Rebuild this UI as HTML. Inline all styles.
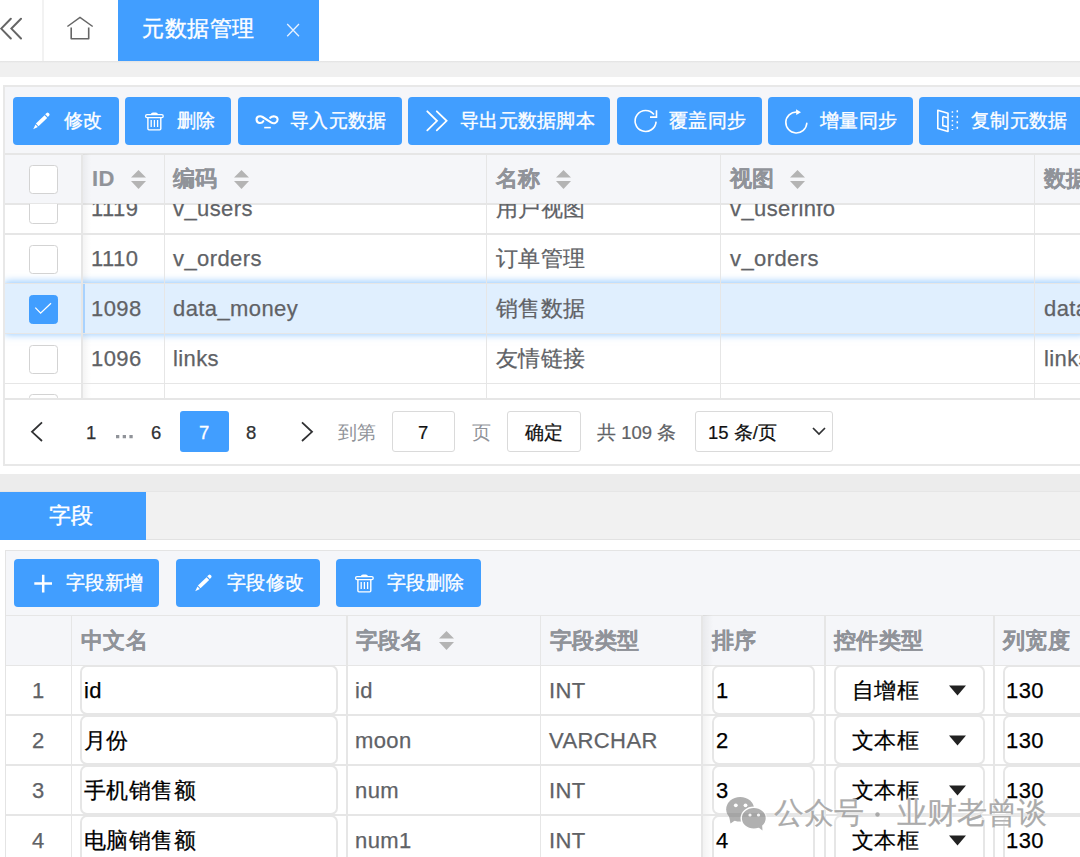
<!DOCTYPE html>
<html><head><meta charset="utf-8">
<style>
*{box-sizing:border-box;margin:0;padding:0}
html,body{width:1080px;height:857px;overflow:hidden;background:#fff;font-family:"Liberation Sans",sans-serif}
.a{position:absolute}
.t{position:absolute;white-space:nowrap;line-height:0;height:0}
.hl{position:absolute;height:1.5px;background:#e6e6e6}
.vl{position:absolute;width:1.5px;background:#e6e6e6}
.btn{position:absolute;background:#419eff;border-radius:4px}
.bt{position:absolute;white-space:nowrap;line-height:0;height:0;color:#fff;font-size:19px;letter-spacing:0.3px;-webkit-text-stroke:0.35px #fff}
.hd{color:#909399;font-weight:bold;font-size:22px;letter-spacing:0.3px;-webkit-text-stroke:0.15px #909399}
.cell{color:#606266;font-size:22px;-webkit-text-stroke:0.25px currentColor;letter-spacing:0.4px}
.sort{position:absolute;width:15px;height:19px}
.chk{position:absolute;width:29px;height:29px;border:1.6px solid #d3d3d3;border-radius:3.5px;background:#fff}
.inp{position:absolute;border:2px solid #e6e6e6;border-radius:7px;background:#fff}
</style></head><body>

<!-- ============ TOP BAR ============ -->
<div class="a" style="left:0;top:0;width:1080px;height:61px;background:#fff"></div>
<svg class="a" style="left:0;top:16px" width="24" height="26" viewBox="0 0 24 26">
<path d="M10.8 2.8 L1.2 12.6 L10.8 22.5 M21 2.8 L11.4 12.6 L21 22.5" fill="none" stroke="#666" stroke-width="2" stroke-linecap="round"/>
</svg>
<div class="vl" style="left:42px;top:0;height:61px;background:#f2f2f2"></div>
<svg class="a" style="left:60px;top:10px" width="40" height="34" viewBox="0 0 40 34">
<path d="M7.4 16.5 L20 7.4 L32.7 16.5" fill="none" stroke="#666" stroke-width="1.5"/>
<path d="M11.2 17.4 V28.7 H28.7 V17.4" fill="none" stroke="#666" stroke-width="1.6" stroke-linejoin="round"/>
</svg>
<div class="a" style="left:118px;top:0;width:201px;height:61px;background:#419eff"></div>
<div class="t" style="left:142px;top:28.5px;font-size:22px;letter-spacing:0.6px;color:#fff;-webkit-text-stroke:0.4px #fff">元数据管理</div>
<svg class="a" style="left:284px;top:21px" width="18" height="18" viewBox="0 0 18 18">
<path d="M3.2 3 L15 15.2 M15 3 L3.2 15.2" stroke="#e8f2ff" stroke-width="1.3"/>
</svg>
<!-- gray band -->
<div class="a" style="left:0;top:61px;width:1080px;height:16px;background:#f0f0f0"></div>
<div class="a" style="left:0;top:61px;width:1080px;height:2px;background:linear-gradient(#e2e2e2,#f0f0f0)"></div>

<!-- ============ CARD 1 ============ -->
<div class="a" style="left:3px;top:85px;width:1090px;height:381px;border:2px solid #e8e8e8;background:#fff"></div>
<div class="a" style="left:5px;top:87px;width:1080px;height:66px;background:#f5f6f9"></div>

<!-- toolbar buttons -->
<div class="btn" style="left:13px;top:97px;width:106px;height:48px"></div>
<div class="btn" style="left:125px;top:97px;width:106px;height:48px"></div>
<div class="btn" style="left:238px;top:97px;width:164px;height:48px"></div>
<div class="btn" style="left:408px;top:97px;width:202px;height:48px"></div>
<div class="btn" style="left:617px;top:97px;width:145px;height:48px"></div>
<div class="btn" style="left:768px;top:97px;width:145px;height:48px"></div>
<div class="btn" style="left:919px;top:97px;width:170px;height:48px"></div>

<div class="bt" style="left:64px;top:121px">修改</div>
<div class="bt" style="left:177px;top:121px">删除</div>
<div class="bt" style="left:290px;top:121px">导入元数据</div>
<div class="bt" style="left:460px;top:121px">导出元数据脚本</div>
<div class="bt" style="left:669px;top:121px">覆盖同步</div>
<div class="bt" style="left:820px;top:121px">增量同步</div>
<div class="bt" style="left:971px;top:121px">复制元数据</div>

<!-- icons -->
<svg class="a" style="left:28px;top:106px" width="30" height="30" viewBox="0 0 30 30">
<path d="M5.2 23.2 L7.5 18.6 L9.9 21 Z" fill="#fff"/>
<path d="M7.9 17.4 L16.6 9.3 L19.2 12 L10.5 20.2 Z" fill="#fff"/>
<path d="M17.2 8.3 L18.6 6.9 Q19.5 6.1 20.6 7 L21.3 7.7 Q22 8.7 21.2 9.6 L19.9 11 Z" fill="#fff"/>
</svg>
<svg class="a" style="left:140px;top:106px" width="30" height="30" viewBox="0 0 30 30">
<path d="M10.8 8.5 Q11 6.6 13 6.6 H15.8 Q17.8 6.6 18 8.5 Z" fill="#fff"/>
<rect x="5.6" y="8.6" width="17.6" height="3" rx="1.4" fill="none" stroke="#fff" stroke-width="1.3"/>
<path d="M7.9 11.9 V22.8 Q7.9 23.9 9 23.9 H19.7 Q20.8 23.9 20.8 22.8 V11.9" fill="none" stroke="#fff" stroke-width="1.4"/>
<path d="M11.2 14 V21 M14.4 14 V21 M17.6 14 V21" stroke="#fff" stroke-width="1.3"/>
</svg>
<svg class="a" style="left:250px;top:106px" width="34" height="30" viewBox="0 0 34 30">
<path d="M13.3 15.2 C12 17.6 7.2 18.1 6.6 14 C6.1 10.6 10 9.3 12.6 11 L21 16.4 C24 18.4 27.6 16.6 27.6 13.5 C27.6 10 22.6 9.4 20.2 11.8" fill="none" stroke="#fff" stroke-width="2.1" stroke-linecap="round"/>
<path d="M14.2 21.6 H20.8" stroke="#fff" stroke-width="1.6"/>
</svg>
<svg class="a" style="left:420px;top:106px" width="34" height="30" viewBox="0 0 34 30">
<path d="M7.3 5.3 L17 14.8 L7.3 24.4 M16.8 5.3 L26.6 14.8 L16.8 24.4" fill="none" stroke="#fff" stroke-width="1.8" stroke-linecap="round"/>
</svg>
<svg class="a" style="left:628px;top:106px" width="34" height="30" viewBox="0 0 34 30">
<path d="M26 8.6 A10.5 10.5 0 1 0 28.1 15.6" fill="none" stroke="#fff" stroke-width="1.6"/>
<path d="M22 11.1 H28.5 V4.3" fill="none" stroke="#fff" stroke-width="1.6"/>
</svg>
<svg class="a" style="left:780px;top:106px" width="34" height="30" viewBox="0 0 34 30">
<path d="M16.6 6 A10.5 10.5 0 1 0 26.8 17.2" fill="none" stroke="#fff" stroke-width="1.6" stroke-linecap="round"/>
<path d="M16 3.2 L21 6.2 L16.3 9 Z" fill="#fff"/>
</svg>
<svg class="a" style="left:930px;top:106px" width="34" height="30" viewBox="0 0 34 30">
<path d="M7.8 4.3 L18 7.3 V25.4 L7.8 22.4 Z" fill="none" stroke="#fff" stroke-width="1.6" stroke-linejoin="round"/>
<path d="M12.8 10.5 L17.6 11.8 M12.8 10.5 V19.6 L17.6 20.8" fill="none" stroke="#fff" stroke-width="1.5"/>
<path d="M22.4 5.3 V24" stroke="#fff" stroke-width="1.5" stroke-dasharray="1.5 2.9"/>
<path d="M27.3 4.3 V23.5" stroke="#fff" stroke-width="1.5" stroke-dasharray="2 3.5"/>
</svg>

<!-- table 1 header -->
<div class="a" style="left:5px;top:153px;width:1080px;height:51px;background:#f5f6f9"></div>
<div class="hl" style="left:5px;top:153px;width:1080px"></div>
<div class="hl" style="left:5px;top:203px;width:1080px"></div>
<div class="vl" style="left:81.3px;top:153px;height:245px"></div>
<div class="vl" style="left:163.6px;top:153px;height:245px"></div>
<div class="vl" style="left:485.6px;top:153px;height:245px"></div>
<div class="vl" style="left:719.7px;top:153px;height:245px"></div>
<div class="vl" style="left:1033.8px;top:153px;height:245px"></div>

<div class="chk" style="left:29px;top:165px"></div>
<div class="a" style="left:83px;top:154px;width:8px;height:244px;background:linear-gradient(90deg,rgba(0,0,0,0.045),rgba(0,0,0,0))"></div>
<div class="t hd" style="left:92px;top:178.5px">ID</div>
<div class="t hd" style="left:173px;top:178.5px">编码</div>
<div class="t hd" style="left:496px;top:178.5px">名称</div>
<div class="t hd" style="left:730px;top:178.5px">视图</div>
<div class="t hd" style="left:1044px;top:178.5px">数据</div>
<svg class="sort" style="left:131px;top:170px" viewBox="0 0 15 19"><path d="M7.5 0 L15 7.6 H0 Z M0 11.1 H15 L7.5 19 Z" fill="#b4b4b4"/></svg>
<svg class="sort" style="left:234px;top:170px" viewBox="0 0 15 19"><path d="M7.5 0 L15 7.6 H0 Z M0 11.1 H15 L7.5 19 Z" fill="#b4b4b4"/></svg>
<svg class="sort" style="left:556px;top:170px" viewBox="0 0 15 19"><path d="M7.5 0 L15 7.6 H0 Z M0 11.1 H15 L7.5 19 Z" fill="#b4b4b4"/></svg>
<svg class="sort" style="left:790px;top:170px" viewBox="0 0 15 19"><path d="M7.5 0 L15 7.6 H0 Z M0 11.1 H15 L7.5 19 Z" fill="#b4b4b4"/></svg>

<!-- table 1 body (clipped) -->
<div class="a" style="left:5px;top:204px;width:1080px;height:194px;overflow:hidden">
<div class="a" style="left:0;top:79.3px;width:1080px;height:50px;background:#e0effe;box-shadow:0 0 8px 1px rgba(64,158,255,0.6)"></div>
<div class="a" style="left:78px;top:79.5px;width:1.5px;height:50px;background:rgba(64,158,255,0.35)"></div>
<div class="hl" style="left:0;top:29.00px;width:1080px"></div>
<div class="hl" style="left:0;top:78.50px;width:1080px"></div>
<div class="hl" style="left:0;top:128.50px;width:1080px"></div>
<div class="hl" style="left:0;top:178.50px;width:1080px"></div>
<div class="hl" style="left:0;top:228.00px;width:1080px"></div>
<div class="chk" style="left:24px;top:-9.0px"></div>
<div class="t cell" style="left:86px;top:5.0px">1119</div>
<div class="t cell" style="left:168px;top:5.0px">v_users</div>
<div class="t cell" style="left:491px;top:5.0px">用户视图</div>
<div class="t cell" style="left:725px;top:5.0px">v_userinfo</div>
<div class="chk" style="left:24px;top:40.5px"></div>
<div class="t cell" style="left:86px;top:54.5px">1110</div>
<div class="t cell" style="left:168px;top:54.5px">v_orders</div>
<div class="t cell" style="left:491px;top:54.5px">订单管理</div>
<div class="t cell" style="left:725px;top:54.5px">v_orders</div>
<div class="chk" style="left:24px;top:90.5px;background:#419eff;border-color:#419eff"><svg class="a" style="left:-1.5px;top:-1.5px" width="29" height="29" viewBox="0 0 29 29"><path d="M6.3 13.6 L11.6 19.2 L22 9.2" fill="none" stroke="#fff" stroke-width="1.3"/></svg></div>
<div class="t cell" style="left:86px;top:104.5px">1098</div>
<div class="t cell" style="left:168px;top:104.5px">data_money</div>
<div class="t cell" style="left:491px;top:104.5px">销售数据</div>
<div class="t cell" style="left:1039px;top:104.5px">data_money</div>
<div class="chk" style="left:24px;top:140.5px"></div>
<div class="t cell" style="left:86px;top:154.5px">1096</div>
<div class="t cell" style="left:168px;top:154.5px">links</div>
<div class="t cell" style="left:491px;top:154.5px">友情链接</div>
<div class="t cell" style="left:1039px;top:154.5px">links</div>
<div class="chk" style="left:24px;top:190.0px"></div>
<div class="vl" style="left:76.3px;top:0;height:194px"></div>
<div class="vl" style="left:158.6px;top:0;height:194px"></div>
<div class="vl" style="left:480.6px;top:0;height:194px"></div>
<div class="vl" style="left:714.7px;top:0;height:194px"></div>
<div class="vl" style="left:1028.8px;top:0;height:194px"></div>
</div>
<!-- pagination -->
<div class="hl" style="left:5px;top:398px;width:1080px"></div>
<svg class="a" style="left:29px;top:420px" width="16" height="24" viewBox="0 0 16 24">
<path d="M13 2.3 L3 11.8 L13 21" fill="none" stroke="#303133" stroke-width="1.8"/>
</svg>
<div class="t" style="left:86px;top:432.5px;font-size:18.5px;color:#303133;-webkit-text-stroke:0.25px #303133">1</div>
<svg class="a" style="left:115px;top:434px" width="20" height="6" viewBox="0 0 20 6"><path d="M1 1h3.3v3.3H1z M7.7 1h3.3v3.3H7.7z M14.4 1h3.3v3.3h-3.3z" fill="#909399"/></svg>
<div class="t" style="left:151px;top:432.5px;font-size:18.5px;color:#303133;-webkit-text-stroke:0.25px #303133">6</div>
<div class="a" style="left:180px;top:411px;width:49px;height:41px;background:#419eff;border-radius:3px"></div>
<div class="t" style="left:199px;top:432.5px;font-size:18.5px;color:#fff;-webkit-text-stroke:0.3px #fff">7</div>
<div class="t" style="left:246px;top:432.5px;font-size:18.5px;color:#303133;-webkit-text-stroke:0.25px #303133">8</div>
<svg class="a" style="left:299px;top:420px" width="16" height="24" viewBox="0 0 16 24">
<path d="M3 2.3 L13 11.8 L3 21" fill="none" stroke="#303133" stroke-width="1.8"/>
</svg>
<div class="t" style="left:338px;top:432.5px;font-size:18.5px;color:#909399">到第</div>
<div class="a" style="left:392px;top:411px;width:63px;height:41px;border:1.5px solid #dadada;border-radius:3px;background:#fff"></div>
<div class="t" style="left:418px;top:432.5px;font-size:18.5px;color:#111;-webkit-text-stroke:0.2px #111">7</div>
<div class="t" style="left:472px;top:432.5px;font-size:18.5px;color:#909399">页</div>
<div class="a" style="left:507px;top:411px;width:74px;height:41px;border:1.5px solid #dadada;border-radius:3px;background:#fff"></div>
<div class="t" style="left:525px;top:432.5px;font-size:18.5px;color:#111;-webkit-text-stroke:0.2px #111">确定</div>
<div class="t" style="left:597px;top:432.5px;font-size:18.5px;color:#606266;-webkit-text-stroke:0.2px #606266">共 109 条</div>
<div class="a" style="left:695px;top:411px;width:138px;height:41px;border:1.5px solid #dadada;border-radius:3px;background:#fff"></div>
<div class="t" style="left:708px;top:432.5px;font-size:18.5px;color:#111;-webkit-text-stroke:0.2px #111">15 条/页</div>
<svg class="a" style="left:811px;top:425px" width="16" height="12" viewBox="0 0 16 12">
<path d="M2 3 L8 9 L14 3" fill="none" stroke="#303133" stroke-width="1.7"/>
</svg>

<!-- ============ SECTION 2 ============ -->
<div class="a" style="left:0;top:474px;width:1080px;height:17px;background:#ececec"></div>
<div class="a" style="left:0;top:491px;width:1080px;height:49px;background:#f1f1f1;border-top:1px solid #e6e6e6;border-bottom:1.5px solid #e2e2e2"></div>
<div class="a" style="left:0;top:491.5px;width:146px;height:48px;background:#419eff"></div>
<div class="t" style="left:49px;top:516px;font-size:22px;color:#fff;-webkit-text-stroke:0.4px #fff">字段</div>

<!-- CARD 2 -->
<div class="a" style="left:4.75px;top:549.5px;width:1090px;height:400px;border:1.5px solid #e4e4e4;background:#fff"></div>
<div class="a" style="left:6px;top:551px;width:1080px;height:64px;background:#f5f6f9"></div>
<div class="btn" style="left:14px;top:559px;width:145px;height:48px"></div>
<div class="btn" style="left:176px;top:559px;width:144px;height:48px"></div>
<div class="btn" style="left:336px;top:559px;width:145px;height:48px"></div>
<div class="bt" style="left:66px;top:583px;font-size:18.8px">字段新增</div>
<div class="bt" style="left:227px;top:583px;font-size:18.8px">字段修改</div>
<div class="bt" style="left:387px;top:583px;font-size:18.8px">字段删除</div>
<svg class="a" style="left:33px;top:573px" width="20" height="20" viewBox="0 0 20 20">
<path d="M10.2 1.8 V19.5 M1.3 10.6 H19" stroke="#fff" stroke-width="2.5"/>
</svg>
<svg class="a" style="left:190px;top:568px" width="30" height="30" viewBox="0 0 30 30">
<path d="M5.2 23.2 L7.5 18.6 L9.9 21 Z" fill="#fff"/>
<path d="M7.9 17.4 L16.6 9.3 L19.2 12 L10.5 20.2 Z" fill="#fff"/>
<path d="M17.2 8.3 L18.6 6.9 Q19.5 6.1 20.6 7 L21.3 7.7 Q22 8.7 21.2 9.6 L19.9 11 Z" fill="#fff"/>
</svg>
<svg class="a" style="left:350px;top:568px" width="30" height="30" viewBox="0 0 30 30">
<path d="M10.8 8.5 Q11 6.6 13 6.6 H15.8 Q17.8 6.6 18 8.5 Z" fill="#fff"/>
<rect x="5.6" y="8.6" width="17.6" height="3" rx="1.4" fill="none" stroke="#fff" stroke-width="1.3"/>
<path d="M7.9 11.9 V22.8 Q7.9 23.9 9 23.9 H19.7 Q20.8 23.9 20.8 22.8 V11.9" fill="none" stroke="#fff" stroke-width="1.4"/>
<path d="M11.2 14 V21 M14.4 14 V21 M17.6 14 V21" stroke="#fff" stroke-width="1.3"/>
</svg>

<!-- table 2 -->
<div class="a" style="left:6px;top:615px;width:1080px;height:50px;background:#f5f6f9"></div>
<div class="hl" style="left:6px;top:614.75px;width:1080px"></div>
<div class="hl" style="left:6px;top:664.75px;width:1080px"></div>
<div class="vl" style="left:70.5px;top:615px;height:250px"></div>
<div class="vl" style="left:346px;top:615px;height:250px"></div>
<div class="vl" style="left:539.8px;top:615px;height:250px"></div>
<div class="vl" style="left:701.3px;top:615px;height:250px"></div>
<div class="a" style="left:703px;top:615px;width:10px;height:250px;background:linear-gradient(90deg,rgba(0,0,0,0.05),rgba(0,0,0,0))"></div>
<div class="vl" style="left:824px;top:615px;height:250px"></div>
<div class="vl" style="left:993.3px;top:615px;height:250px"></div>
<div class="t hd" style="left:81px;top:640.5px">中文名</div>
<div class="t hd" style="left:356px;top:640.5px">字段名</div>
<svg class="sort" style="left:439px;top:631px" viewBox="0 0 15 19"><path d="M7.5 0 L15 7.6 H0 Z M0 11.1 H15 L7.5 19 Z" fill="#b4b4b4"/></svg>
<div class="t hd" style="left:550px;top:640.5px">字段类型</div>
<div class="t hd" style="left:712px;top:640.5px">排序</div>
<div class="t hd" style="left:834px;top:640.5px">控件类型</div>
<div class="t hd" style="left:1003px;top:640.5px">列宽度</div>
<div class="hl" style="left:6px;top:714.25px;width:1080px"></div>
<div class="t cell" style="left:32px;top:690.8px">1</div>
<div class="inp" style="left:80px;top:664.75px;width:258px;height:50px"></div>
<div class="t cell" style="left:84px;top:690.8px;color:#000">id</div>
<div class="t cell" style="left:355px;top:690.8px">id</div>
<div class="t cell" style="left:549px;top:690.8px">INT</div>
<div class="inp" style="left:712px;top:664.75px;width:103px;height:50px"></div>
<div class="t cell" style="left:716px;top:690.8px;color:#000">1</div>
<div class="inp" style="left:834px;top:664.75px;width:151px;height:50px"></div>
<div class="t cell" style="left:852px;top:690.8px;color:#000">自增框</div>
<svg class="a" style="left:949px;top:685px" width="18" height="11" viewBox="0 0 18 11"><path d="M0 0.5 H17 L8.5 10.5 Z" fill="#222"/></svg>
<div class="inp" style="left:1003px;top:664.75px;width:100px;height:50px"></div>
<div class="t cell" style="left:1006px;top:690.8px;color:#000">130</div>
<div class="hl" style="left:6px;top:764.25px;width:1080px"></div>
<div class="t cell" style="left:32px;top:740.8px">2</div>
<div class="inp" style="left:80px;top:714.75px;width:258px;height:50px"></div>
<div class="t cell" style="left:84px;top:740.8px;color:#000">月份</div>
<div class="t cell" style="left:355px;top:740.8px">moon</div>
<div class="t cell" style="left:549px;top:740.8px">VARCHAR</div>
<div class="inp" style="left:712px;top:714.75px;width:103px;height:50px"></div>
<div class="t cell" style="left:716px;top:740.8px;color:#000">2</div>
<div class="inp" style="left:834px;top:714.75px;width:151px;height:50px"></div>
<div class="t cell" style="left:852px;top:740.8px;color:#000">文本框</div>
<svg class="a" style="left:949px;top:735px" width="18" height="11" viewBox="0 0 18 11"><path d="M0 0.5 H17 L8.5 10.5 Z" fill="#222"/></svg>
<div class="inp" style="left:1003px;top:714.75px;width:100px;height:50px"></div>
<div class="t cell" style="left:1006px;top:740.8px;color:#000">130</div>
<div class="hl" style="left:6px;top:814.25px;width:1080px"></div>
<div class="t cell" style="left:32px;top:790.8px">3</div>
<div class="inp" style="left:80px;top:764.75px;width:258px;height:50px"></div>
<div class="t cell" style="left:84px;top:790.8px;color:#000">手机销售额</div>
<div class="t cell" style="left:355px;top:790.8px">num</div>
<div class="t cell" style="left:549px;top:790.8px">INT</div>
<div class="inp" style="left:712px;top:764.75px;width:103px;height:50px"></div>
<div class="t cell" style="left:716px;top:790.8px;color:#000">3</div>
<div class="inp" style="left:834px;top:764.75px;width:151px;height:50px"></div>
<div class="t cell" style="left:852px;top:790.8px;color:#000">文本框</div>
<svg class="a" style="left:949px;top:785px" width="18" height="11" viewBox="0 0 18 11"><path d="M0 0.5 H17 L8.5 10.5 Z" fill="#222"/></svg>
<div class="inp" style="left:1003px;top:764.75px;width:100px;height:50px"></div>
<div class="t cell" style="left:1006px;top:790.8px;color:#000">130</div>
<div class="hl" style="left:6px;top:864.25px;width:1080px"></div>
<div class="t cell" style="left:32px;top:840.8px">4</div>
<div class="inp" style="left:80px;top:814.75px;width:258px;height:50px"></div>
<div class="t cell" style="left:84px;top:840.8px;color:#000">电脑销售额</div>
<div class="t cell" style="left:355px;top:840.8px">num1</div>
<div class="t cell" style="left:549px;top:840.8px">INT</div>
<div class="inp" style="left:712px;top:814.75px;width:103px;height:50px"></div>
<div class="t cell" style="left:716px;top:840.8px;color:#000">4</div>
<div class="inp" style="left:834px;top:814.75px;width:151px;height:50px"></div>
<div class="t cell" style="left:852px;top:840.8px;color:#000">文本框</div>
<svg class="a" style="left:949px;top:835px" width="18" height="11" viewBox="0 0 18 11"><path d="M0 0.5 H17 L8.5 10.5 Z" fill="#222"/></svg>
<div class="inp" style="left:1003px;top:814.75px;width:100px;height:50px"></div>
<div class="t cell" style="left:1006px;top:840.8px;color:#000">130</div>

<!-- watermark -->
<svg class="a" style="left:720px;top:790px" width="50" height="45" viewBox="0 0 50 45">
<g opacity="0.55">
<ellipse cx="20.2" cy="19.3" rx="14" ry="12.3" fill="#707070"/>
<path d="M9 26 L10.5 33.5 L17 29 Z" fill="#707070"/>
<circle cx="15.8" cy="15.3" r="1.9" fill="#fff"/><circle cx="25.5" cy="15.3" r="1.9" fill="#fff"/>
<ellipse cx="33.8" cy="28.2" rx="12.6" ry="11" fill="#707070" stroke="#fff" stroke-width="1.4"/>
<path d="M38 37 L42.5 40.5 L42 34 Z" fill="#707070"/>
<circle cx="30" cy="25" r="1.6" fill="#fff"/><circle cx="38.5" cy="25" r="1.6" fill="#fff"/>
</g>
</svg>
<div class="t" style="left:774px;top:813px;font-size:29.5px;color:#ababab;-webkit-text-stroke:0.2px #ababab;text-shadow:0 0 2px #fff,0 0 1px #fff">公众号</div>
<svg class="a" style="left:873px;top:810px" width="9" height="9" viewBox="0 0 9 9"><circle cx="4.5" cy="4.5" r="2.2" fill="#a8a8a8"/></svg>
<div class="t" style="left:897px;top:813px;font-size:29.5px;color:#ababab;-webkit-text-stroke:0.2px #ababab;text-shadow:0 0 2px #fff,0 0 1px #fff">业财老曾谈</div>
</body></html>
